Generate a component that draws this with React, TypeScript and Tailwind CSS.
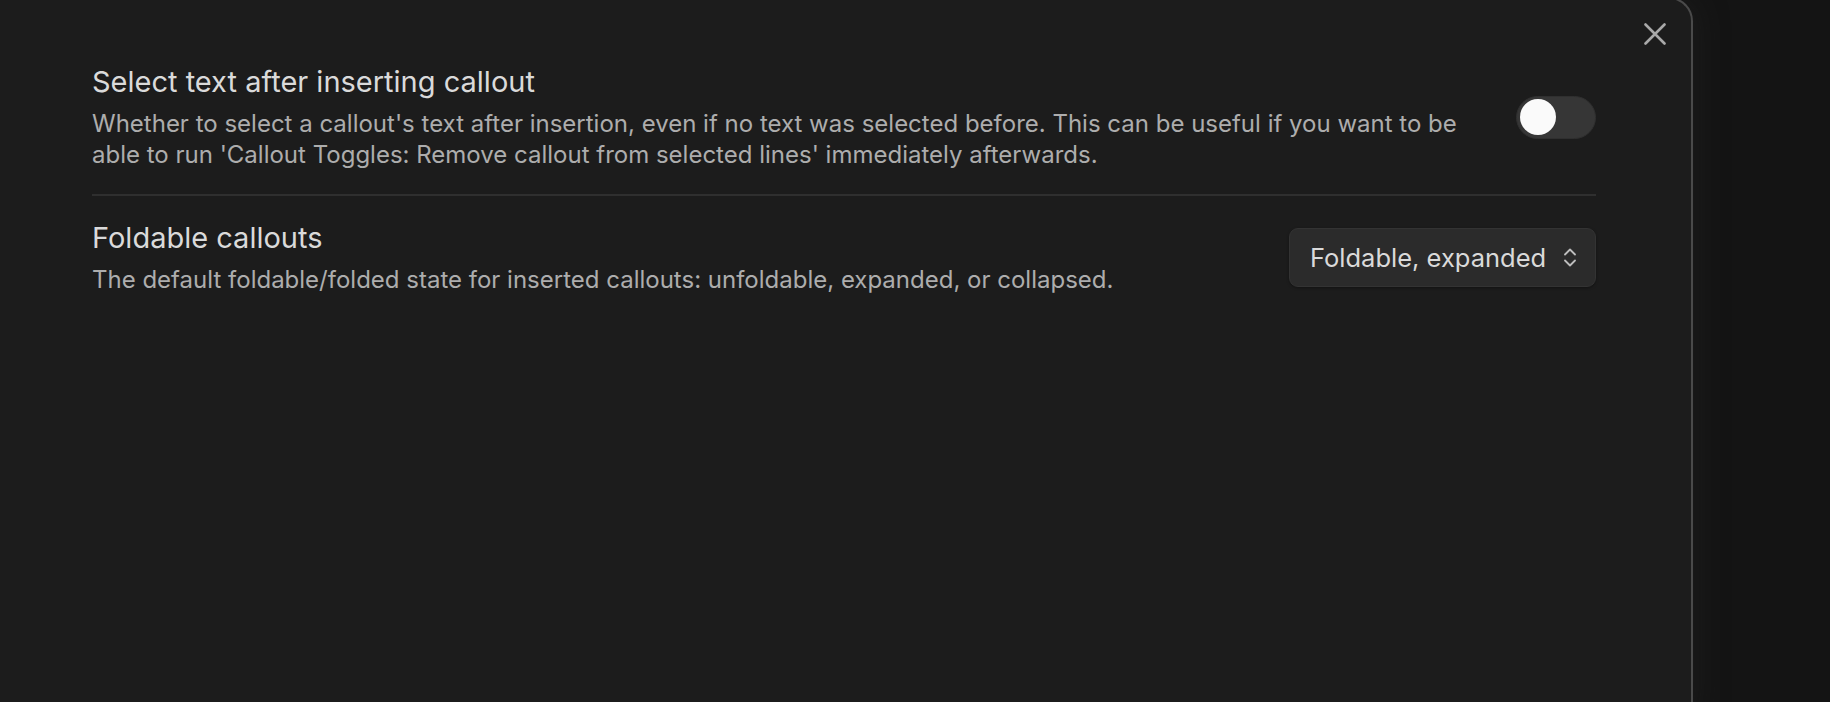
import React from "react";

function CloseIcon() {
    return (
        <svg width="22" height="22" viewBox="0 0 22 22" fill="none">
            <path d="M1.5 1.5 L20.5 20.5 M20.5 1.5 L1.5 20.5" stroke="#a9a9a9" strokeWidth="2.6" strokeLinecap="round" />
        </svg>
    );
}

function UpDownIcon() {
    return (
        <svg width="14" height="21" viewBox="0 0 14 21" fill="none">
            <path d="M2 7.5 L7 2.5 L12 7.5 M2 13.5 L7 18.5 L12 13.5" stroke="#bdbdbd" strokeWidth="1.8" strokeLinecap="round" strokeLinejoin="round" />
        </svg>
    );
}

function Toggle() {
    return (
        <div className="flex h-[43px] w-[80px] shrink-0 items-center rounded-full border border-[#2f2f2f] bg-[#363636] pl-[3px]">
            <div className="h-[36px] w-[36px] rounded-full bg-[#fafafa]" />
        </div>
    );
}

function Dropdown() {
    return (
        <div className="flex h-[59px] w-[307px] shrink-0 items-center justify-between rounded-[9px] border border-[#333333] bg-[#2b2b2b] pl-[20px] pr-[18px] shadow-[0_1px_3px_rgba(0,0,0,0.35)]">
            <span className="text-[25.5px] leading-none text-[#dadada]">Foldable, expanded</span>
            <UpDownIcon />
        </div>
    );
}

export default function App() {
    return (
        <div
            className="flex h-[702px] w-[1830px] overflow-hidden bg-[#141414]"
            style={{ fontFamily: "Inter, 'Noto Sans', sans-serif" }}
        >
            <div className="-mt-[3px] flex h-[720px] w-[1693px] shrink-0 flex-col rounded-tr-[24px] border-r-2 border-t-2 border-[#4a4a4a] bg-[#1c1c1c] shadow-[6px_0_30px_rgba(40,40,40,0.35)]">
                <div className="flex justify-end pr-[25px] pt-[24px]">
                    <CloseIcon />
                </div>

                <div className="pl-[92px] pr-[95px]">
                    <div className="flex items-center justify-between border-b-2 border-[#2f2f2f] pb-[24px] pt-[19px]">
                        <div>
                            <div className="text-[29px] leading-[36px] text-[#dadada]">
                                Select text after inserting callout
                            </div>
                            <div className="mt-[8px] text-[24px] leading-[31px] text-[#adadad]">
                                Whether to select a callout's text after insertion, even if no text was selected before. This can be useful if you want to be
                                <br />
                                able to run 'Callout Toggles: Remove callout from selected lines' immediately afterwards.
                            </div>
                        </div>
                        <Toggle />
                    </div>

                    <div className="flex items-center justify-between pt-[24px]">
                        <div>
                            <div className="text-[29px] leading-[36px] text-[#dadada]">
                                Foldable callouts
                            </div>
                            <div className="mt-[8px] text-[24px] leading-[31px] text-[#adadad]">
                                The default foldable/folded state for inserted callouts: unfoldable, expanded, or collapsed.
                            </div>
                        </div>
                        <Dropdown />
                    </div>
                </div>
            </div>
            <div className="flex-1" />
        </div>
    );
}
